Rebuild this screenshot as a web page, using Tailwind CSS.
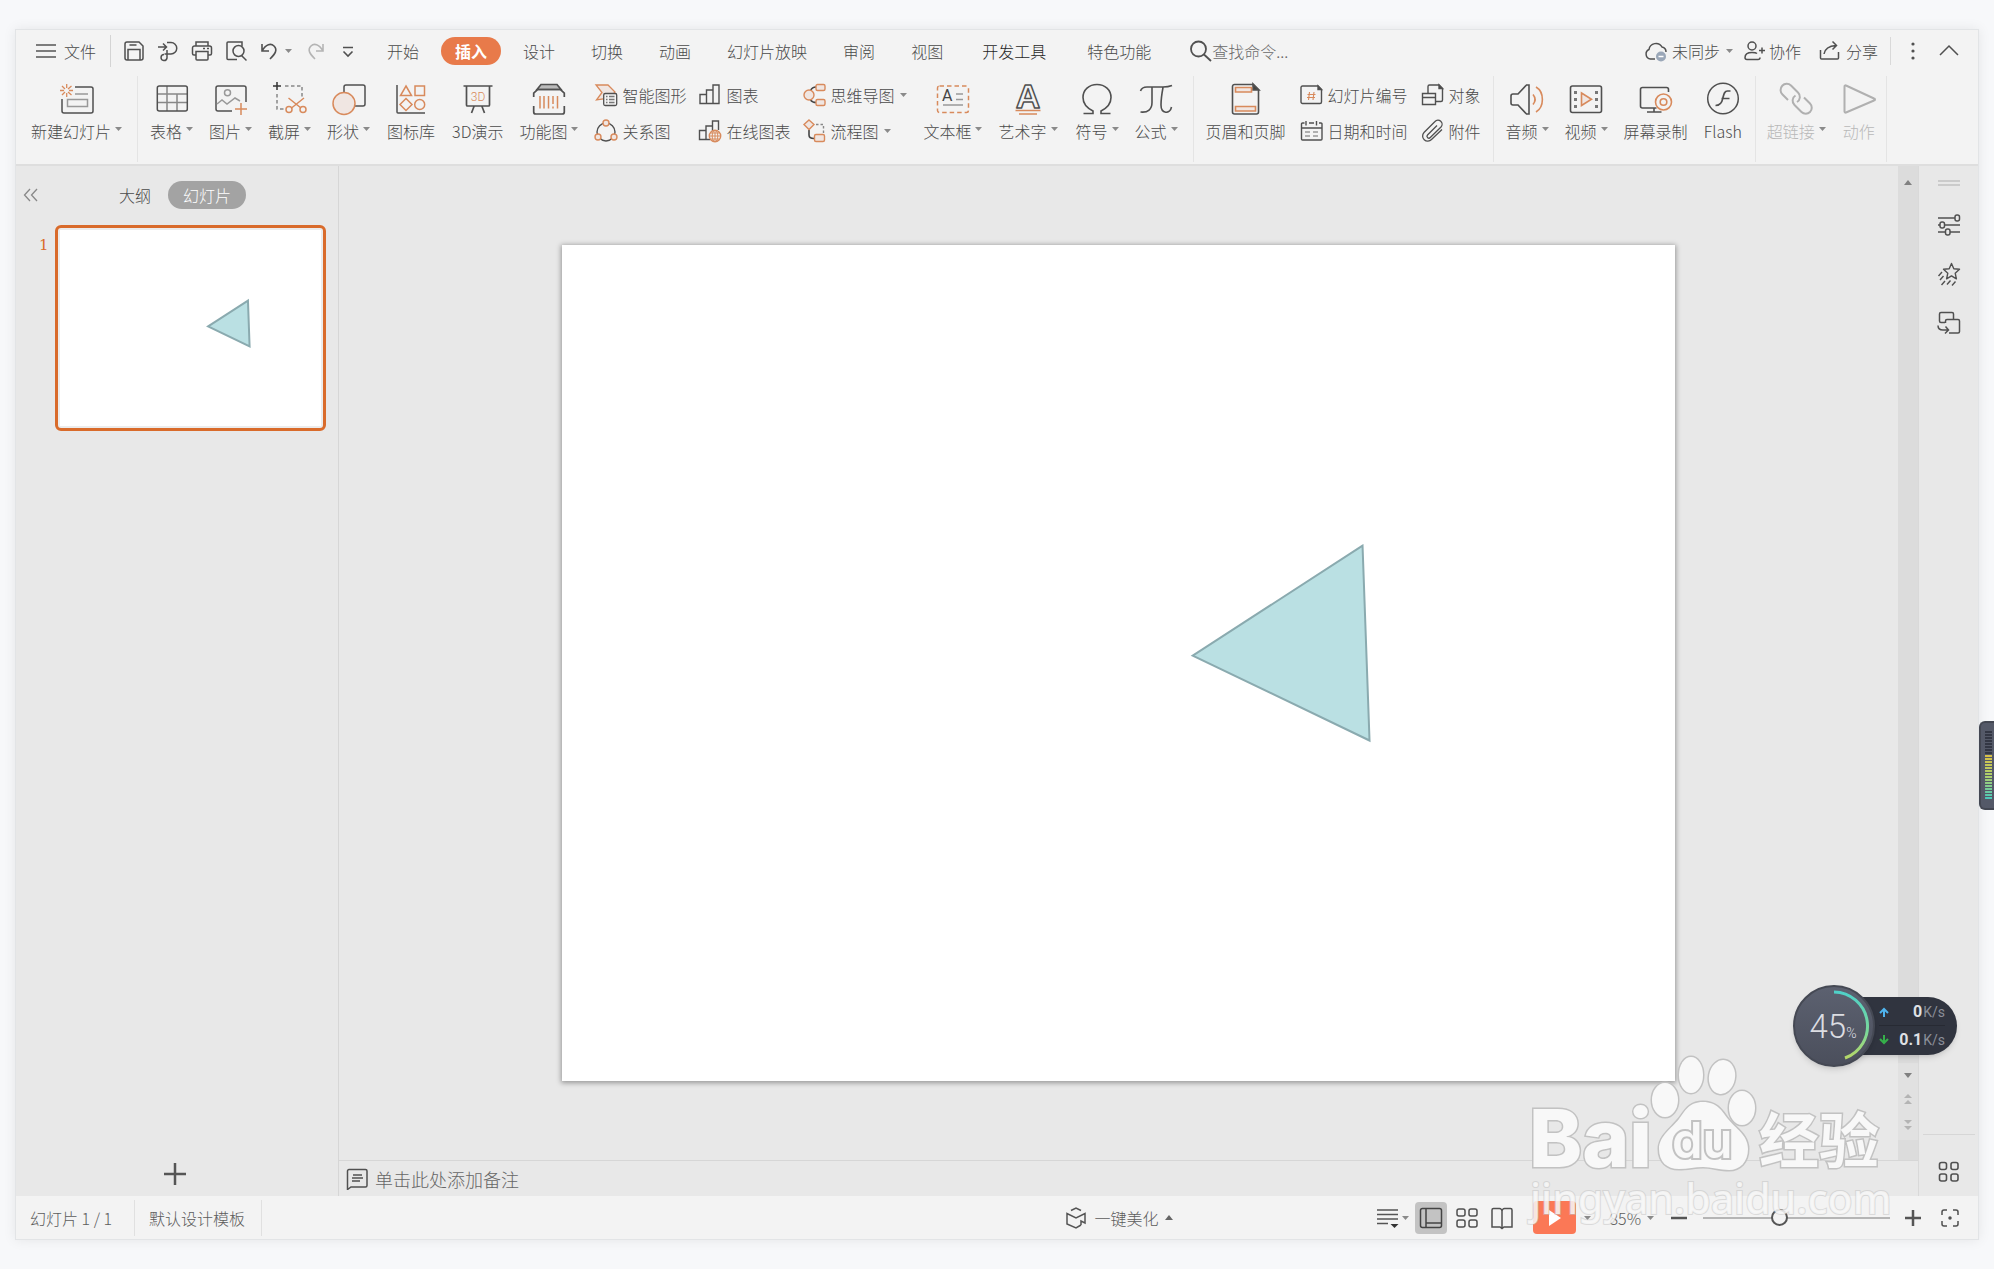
<!DOCTYPE html>
<html lang="zh-CN">
<head>
    <meta charset="UTF-8">
    <meta name="viewport" content="width=device-width, initial-scale=1.0">
    <title>演示文稿</title>
    <script src="https://cdn.jsdelivr.net/npm/@tailwindcss/browser@4"></script>
</head>
<body class="relative min-h-screen flex flex-col bg-[#f7f8fa] px-[15px] py-[29px] overflow-hidden font-['Noto_Sans_CJK_SC',sans-serif] font-light text-base leading-5 text-[#4a4a4a]">

    <!-- shared small glyphs -->
    <svg class="hidden">
        <symbol id="caret" viewBox="0 0 7 4"><path d="M0 0h7L3.500 4z" fill="#8a8a8a"/></symbol>
        <symbol id="triangle" viewBox="0 0 1114 836">
            <path d="M801 301L631 411L808 496z" fill="#bae0e3" stroke="#8aaaaf" stroke-width="2" vector-effect="non-scaling-stroke"/>
        </symbol>
    </svg>

    <div class="flex-1 flex flex-col border border-[#e2e4e6] shadow-[0_0_12px_rgba(0,0,0,0.08)] bg-[#f3f3f3]">

        <!-- menu bar -->
        <header class="flex items-center h-[42px] pl-5 pr-[19px] whitespace-nowrap">
            <button class="flex items-center gap-2">
                <svg class="w-5 h-5" fill="none" stroke="#555" stroke-width="1.500"><path d="M0 4h20M0 10h20M0 16h20"/></svg>
                文件
            </button>
            <div class="w-px h-8 bg-[#d4d4d4] ml-[14px] mr-3"></div>
            <div class="flex items-center gap-[12px]">
                <button aria-label="保存"><svg class="w-[22px] h-[22px]" fill="none" stroke="#505050" stroke-width="1.500"><path d="M2 4a2 2 0 0 1 2-2h12l4 4v12a2 2 0 0 1-2 2H4a2 2 0 0 1-2-2zM5 20V9.500h12V20M6.500 5h7" /></svg></button>
                <button aria-label="输出"><svg class="w-[22px] h-[22px]" fill="none" stroke="#505050" stroke-width="1.500"><path d="M1 7h8M6 3.500L9.500 7L6 10.500M10 2.500h4a5.500 5.500 0 0 1 0 11.500H7.500M10 10v8a3 3 0 1 1-3-3.500"/></svg></button>
                <button aria-label="打印"><svg class="w-[22px] h-[22px]" fill="none" stroke="#505050" stroke-width="1.500"><path d="M5 6V2h12v4M5 15H3a1.500 1.500 0 0 1-1.500-1.500V8A2 2 0 0 1 3.500 6h15a2 2 0 0 1 2 2v5.500A1.500 1.500 0 0 1 19 15h-2M5 11.500h12V19a1 1 0 0 1-1 1H6a1 1 0 0 1-1-1zM12 8.500h2M16 8.500h2"/></svg></button>
                <button aria-label="打印预览"><svg class="w-[22px] h-[22px]" fill="none" stroke="#505050" stroke-width="1.500"><path d="M17 6V2H3a1 1 0 0 0-1 1v15.500a1 1 0 0 0 1 1h9M16.500 15.500l5 5"/><circle cx="13.500" cy="11" r="5.500"/></svg></button>
                <button aria-label="撤销" class="flex items-center gap-1"><svg class="w-[22px] h-[22px]" fill="none" stroke="#505050" stroke-width="1.600"><path d="M3 4v7h7M3 11c4-7 9-8 12-5c4 4 1 8-4 13"/></svg><svg class="w-[7px] h-1"><use href="#caret"/></svg></button>
                <button aria-label="恢复"><svg class="w-[22px] h-[22px]" fill="none" stroke="#b4b4b4" stroke-width="1.600"><path d="M19 4v7h-7M19 11c-4-7-9-8-12-5c-4 4-1 8 4 13"/></svg></button>
                <button aria-label="更多"><svg class="w-[18px] h-[22px]" fill="none" stroke="#505050" stroke-width="1.600"><path d="M5 7.500h10M5.500 11.500L10 16l4.500-4.500"/></svg></button>
            </div>
            <nav class="flex items-center gap-2 ml-[17px]">
                <button class="px-[14px] h-[28px]">开始</button>
                <button class="px-[14px] h-[28px] rounded-full bg-[#e87a4a] text-white font-bold">插入</button>
                <button class="px-[14px] h-[28px]">设计</button>
                <button class="px-[14px] h-[28px]">切换</button>
                <button class="px-[14px] h-[28px]">动画</button>
                <button class="px-[14px] h-[28px]">幻灯片放映</button>
                <button class="px-[14px] h-[28px]">审阅</button>
                <button class="px-[14px] h-[28px]">视图</button>
                <button class="px-[17px] h-[28px] text-[#1f1f1f]">开发工具</button>
                <button class="px-[16px] h-[28px]">特色功能</button>
            </nav>
            <label class="flex items-center ml-[23px]">
                <svg class="w-[22px] h-[22px]" fill="none" stroke="#505050" stroke-width="1.800"><circle cx="8.500" cy="9" r="7.500"/><path d="M14 14.500l7 6.500"/></svg>
                <input type="text" aria-label="查找命令" placeholder="查找命令..." class="w-[100px] bg-transparent outline-none placeholder:text-[#6a6a6a]">
            </label>
            <div class="flex items-center ml-auto">
                <button class="flex items-center">
                    <svg class="w-6 h-[22px] mr-1" fill="none" stroke="#505050" stroke-width="1.500"><path d="M11 19H6.500A5 5 0 0 1 5 9.500A7 7 0 0 1 18 7a5 5 0 0 1 4 5"/><circle cx="17" cy="16.500" r="5" fill="#9aa7b8" stroke="none"/><path d="M14.500 16.500h5" stroke="#fff"/></svg>
                    未同步<svg class="w-[7px] h-1 ml-[6px]"><use href="#caret"/></svg>
                </button>
                <button class="flex items-center gap-1 ml-[10px]">
                    <svg class="w-[22px] h-[22px]" fill="none" stroke="#505050" stroke-width="1.500"><circle cx="9" cy="6" r="4"/><path d="M14 13.500c-1-1-2-1-5-1c-5 0-7 2-7 5c0 1.500 1 2 2 2h11c1.500 0 2-1 2-2M16 10.500h6M19 7.500v6"/></svg>
                    协作
                </button>
                <button class="flex items-center gap-[5px] ml-[18px]">
                    <svg class="w-[22px] h-[22px]" fill="none" stroke="#505050" stroke-width="1.500"><path d="M1.500 10v8a1 1 0 0 0 1 1h16a1 1 0 0 0 1-1v-6M5 14c1-6 5-8 12-8.500M13.500 1.500l4 4l-4 4"/></svg>
                    分享
                </button>
                <div class="w-px h-7 bg-[#d9d9d9] ml-3 mr-[18px]"></div>
                <button aria-label="更多选项"><svg class="w-2 h-5" fill="#505050"><circle cx="4" cy="3" r="1.600"/><circle cx="4" cy="10" r="1.600"/><circle cx="4" cy="17" r="1.600"/></svg></button>
                <button aria-label="收起功能区" class="ml-[22px]"><svg class="w-5 h-5" fill="none" stroke="#505050" stroke-width="1.500"><path d="M1 14L10 5l9 9"/></svg></button>
            </div>
        </header>

        <!-- ribbon -->
        <div class="flex h-[94px] pt-1 pb-[2px] whitespace-nowrap border-b-2 border-[#dedede]">
            <div class="flex items-start pt-[6px] pl-[15px] pr-[15px] border-r border-[#e4e4e4]">
                <button class="flex flex-col items-center gap-[5px]">
                    <svg class="w-[34px] h-[34px]" fill="none" stroke="#505050" stroke-width="1.500"><path d="M15 5h16a2 2 0 0 1 2 2v22a2 2 0 0 1-2 2H4a2 2 0 0 1-2-2V17"/><path d="M6.700 2v4M6.700 11v4M0 8.500h4M9 8.500h4M2 4l3 3M8 10l3.500 3M11.500 4L8 7M5 10l-3 3" stroke="#d88a5c" stroke-width="1.300"/><path d="M15 12h13M7.500 17.500h20v7h-20z" stroke="#999"/></svg>
                    <span class="flex items-center gap-1">新建幻灯片<svg class="w-[7px] h-1 mb-1"><use href="#caret"/></svg></span>
                </button>
            </div>
            <div class="flex items-start pt-[6px] pl-3 pr-[15px] gap-4 border-r border-[#e4e4e4]">
                <button class="flex flex-col items-center gap-[5px]">
                    <svg class="w-[34px] h-[34px]" fill="none" stroke="#505050" stroke-width="1.500"><path d="M12 4v25M22 12v17M2 12h30M2 20.500h30" stroke="#888"/><rect x="2.300" y="4" width="30" height="25" rx="2"/></svg>
                    <span class="flex items-center gap-1">表格<svg class="w-[7px] h-1 mb-1"><use href="#caret"/></svg></span>
                </button>
                <button class="flex flex-col items-center gap-[5px]">
                    <svg class="w-[34px] h-[34px]" fill="none" stroke="#505050" stroke-width="1.500"><path d="M18 29H4a2 2 0 0 1-2-2V6a2 2 0 0 1 2-2h26a2 2 0 0 1 2 2v14"/><g stroke="#999"><circle cx="13.500" cy="10.700" r="3"/><path d="M3 22l5-4l5 4l8-6l5 3"/></g><path d="M27 21v12M21 27h12" stroke="#d88a5c"/></svg>
                    <span class="flex items-center gap-1">图片<svg class="w-[7px] h-1 mb-1"><use href="#caret"/></svg></span>
                </button>
                <button class="flex flex-col items-center gap-[5px]">
                    <svg class="w-[34px] h-[34px]" fill="none" stroke="#888" stroke-width="1.500"><path d="M12 4h17v12M4 12v15h8" stroke-dasharray="3.500 2.500"/><path d="M4 0v8M0 4h8" stroke="#333"/><g stroke="#d88a5c"><path d="M15.500 16L28 26M31 16L18.500 26"/><circle cx="16" cy="27.500" r="3"/><circle cx="30" cy="27.500" r="3"/></g></svg>
                    <span class="flex items-center gap-1">截屏<svg class="w-[7px] h-1 mb-1"><use href="#caret"/></svg></span>
                </button>
                <button class="flex flex-col items-center gap-[5px]">
                    <svg class="w-[34px] h-[34px]" fill="none" stroke="#505050" stroke-width="1.500"><rect x="12" y="3" width="21" height="21" rx="2"/><circle cx="12" cy="21.500" r="11" fill="#f0e6e2" stroke="#d88a5c"/></svg>
                    <span class="flex items-center gap-1">形状<svg class="w-[7px] h-1 mb-1"><use href="#caret"/></svg></span>
                </button>
                <button class="flex flex-col items-center gap-[5px] px-px">
                    <svg class="w-[34px] h-[34px]" fill="none" stroke="#505050" stroke-width="1.500"><path d="M3 3v27a1 1 0 0 0 1 1h27"/><g stroke="#d88a5c"><path d="M12 4l5.500 9.500h-11zM21 4h9.500v9.500H21zM12 16.500l6 6l-6 6l-6-6z"/><circle cx="25.700" cy="22.500" r="5"/></g></svg>
                    <span>图标库</span>
                </button>
                <button class="flex flex-col items-center gap-[5px]">
                    <svg class="w-[34px] h-[34px]" fill="none" stroke="#505050" stroke-width="1.700"><path d="M2.500 4h29M5.500 4v19a1 1 0 0 0 1 1h21a1 1 0 0 0 1-1V4M13 24.500L10.500 31M21 24.500l2.500 6.500"/><text x="17" y="18.500" text-anchor="middle" font-family="Roboto" font-size="12" fill="#d88a5c" stroke="none">3D</text></svg>
                    <span>3D演示</span>
                </button>
                <button class="flex flex-col items-center gap-[5px]">
                    <svg class="w-[34px] h-[34px]" fill="none" stroke="#505050" stroke-width="1.700"><path d="M5 7.500L9 2.500h16l4 5z" fill="#bbb"/><path d="M1.700 15v-4L5.500 7.500h23l3.800 3.500v4M1.700 24v6a2 2 0 0 0 2 2h26.600a2 2 0 0 0 2-2v-6"/><path d="M8 14v12.500M12 14v12.500M16.500 14v12.500M21 14v8M21 24.500v2M25.500 14v12.500" stroke="#d88a5c" stroke-width="1.500"/></svg>
                    <span class="flex items-center gap-1">功能图<svg class="w-[7px] h-1 mb-1"><use href="#caret"/></svg></span>
                </button>
                <div class="grid grid-cols-[repeat(3,auto)] gap-x-3 gap-y-3 pt-px">
                    <button class="flex items-center gap-1">
                        <svg class="w-6 h-6" fill="none" stroke="#d88a5c" stroke-width="1.300"><path d="M2 2h12l7 7l-5 6L2.500 17L8 9.500z" fill="#f0e6e2"/><rect x="9.700" y="10.500" width="13" height="12" rx="1.500" fill="#f3f3f3" stroke="#505050"/><path d="M12 13.500h1.500M15 13.500h5.500M12 16.500h1.500M15 16.500h5.500M12 19.500h1.500M15 19.500h5.500" stroke="#777"/></svg>
                        智能图形
                    </button>
                    <button class="flex items-center gap-1">
                        <svg class="w-6 h-6" fill="none" stroke="#505050" stroke-width="1.400"><path d="M2 20.500V11.500h6.500v9zM8.500 20.500V7H15v13.500M15 20.500V2h6v18.500H2"/></svg>
                        图表
                    </button>
                    <button class="flex items-center gap-1">
                        <svg class="w-6 h-6" fill="none" stroke="#d88a5c" stroke-width="1.400"><path d="M8.500 7.500C10 4.500 11.500 4 14 4M8.500 17c1.500 2 3 2.500 5.500 2.500" stroke="#444" stroke-width="1.600"/><circle cx="7" cy="12" r="5" fill="#f0e6e2"/><rect x="14" y="1.500" width="9" height="6" rx="1.500" fill="#f0e6e2"/><rect x="14" y="16.500" width="9" height="6" rx="1.500" fill="#f0e6e2"/></svg>
                        思维导图<svg class="w-[7px] h-1 ml-[2px]"><use href="#caret"/></svg>
                    </button>
                    <button class="flex items-center gap-1">
                        <svg class="w-6 h-6" fill="none" stroke="#505050" stroke-width="1.400"><circle cx="12" cy="13" r="9"/><g stroke="#d88a5c" fill="#f0e6e2"><circle cx="12" cy="4" r="3"/><circle cx="4" cy="18" r="3"/><circle cx="20" cy="18" r="3"/></g></svg>
                        关系图
                    </button>
                    <button class="flex items-center gap-1">
                        <svg class="w-6 h-6" fill="none" stroke="#505050" stroke-width="1.400"><path d="M1.500 20.500V11.500H8v9zM8 20.500V7h6.500v6M14.500 10V2h6v9M1.500 20.500H12"/><circle cx="17" cy="17" r="5.700" fill="#f3f3f3" stroke="#d88a5c"/><path d="M11 17h12M17 11v12M12.500 14h9M12.500 20h9" stroke="#d88a5c" stroke-width="1"/><ellipse cx="17" cy="17" rx="2.800" ry="5.700" stroke="#d88a5c" stroke-width="1"/></svg>
                        在线图表
                    </button>
                    <button class="flex items-center gap-1">
                        <svg class="w-6 h-6" fill="none" stroke="#d88a5c" stroke-width="1.400"><path d="M7 11v5c0 2.500 2 3.500 5 3.500" stroke="#444" stroke-width="1.600"/><path d="M14 5.500h7.500V14" stroke="#888" stroke-dasharray="2.500 2"/><path d="M7 1l5 4.500l-5 5l-5-5z" fill="#f0e6e2"/><rect x="12.500" y="15.500" width="10" height="7" rx="1.500" fill="#f0e6e2"/></svg>
                        流程图<svg class="w-[7px] h-1 ml-[2px]"><use href="#caret"/></svg>
                    </button>
                </div>
                <button class="flex flex-col items-center gap-[5px]">
                    <svg class="w-[34px] h-[34px]" fill="none" stroke="#999" stroke-width="1.500"><rect x="1.500" y="4" width="31" height="26.500" rx="2" stroke="#d88a5c" stroke-dasharray="4.500 3"/><path d="M20 12h7M20 17.500h7M7 23h20"/><text x="6" y="19" font-family="Roboto" font-size="16" font-weight="400" fill="#444" stroke="none">A</text></svg>
                    <span class="flex items-center gap-1">文本框<svg class="w-[7px] h-1 mb-1"><use href="#caret"/></svg></span>
                </button>
                <button class="flex flex-col items-center gap-[5px] pr-[2px]">
                    <svg class="w-[34px] h-[34px]" fill="none" stroke="#505050" stroke-width="1.500" stroke-linejoin="round"><text x="17" y="26" text-anchor="middle" font-family="Liberation Sans" font-size="34" font-weight="700">A</text><path d="M4.500 28.500h25M8 32h18" stroke="#d88a5c"/></svg>
                    <span class="flex items-center gap-1">艺术字<svg class="w-[7px] h-1 mb-1"><use href="#caret"/></svg></span>
                </button>
                <button class="flex flex-col items-center gap-[5px]">
                    <svg class="w-[34px] h-[34px]" fill="none" stroke="#505050" stroke-width="1.600"><path d="M3.500 31.500H13v-2.500C7 26 3 21.500 3 15.500C3 8 9 2.500 17 2.500S31 8 31 15.500C31 21.500 27 26 21 29v2.500h9.500"/></svg>
                    <span class="flex items-center gap-1">符号<svg class="w-[7px] h-1 mb-1"><use href="#caret"/></svg></span>
                </button>
                <button class="flex flex-col items-center gap-[5px]">
                    <svg class="w-[34px] h-[34px]" fill="none" stroke="#505050" stroke-width="1.600"><path d="M1.500 9C2.500 6 4.500 5 8 5h16c4 0 6-.3 9-1.500M13 5.500v15C13 27 9 31 1.500 30M24 5.500c-1.500 8-2 12-2 17.500c0 9 9 9.500 10.500 2"/></svg>
                    <span class="flex items-center gap-1">公式<svg class="w-[7px] h-1 mb-1"><use href="#caret"/></svg></span>
                </button>
            </div>
            <div class="flex items-start pt-[6px] pl-3 pr-3 border-r border-[#e4e4e4]">
                <button class="flex flex-col items-center gap-[5px]">
                    <svg class="w-[34px] h-[34px]" fill="none" stroke="#505050" stroke-width="1.600"><path d="M5.500 2.500H24l5.500 5.500v22a2 2 0 0 1-2 2h-22a2 2 0 0 1-2-2v-25.500a2 2 0 0 1 2-2z"/><path d="M24 2v6h6z" fill="#444"/><path d="M6.500 5.500h16v4.500h-16zM6.500 24.500h20V29h-20z" stroke="#d88a5c" fill="#f0e6e2"/></svg>
                    <span>页眉和页脚</span>
                </button>
                <div class="grid grid-cols-[repeat(2,auto)] gap-x-[13px] gap-y-3 pt-px ml-[14px]">
                    <button class="flex items-center gap-1">
                        <svg class="w-6 h-6" fill="none" stroke="#505050" stroke-width="1.400"><path d="M2.500 3H18l3.500 3.500V19a1.500 1.500 0 0 1-1.500 1.500H2.500A1.500 1.500 0 0 1 1 19V4.500A1.500 1.500 0 0 1 2.500 3z"/><path d="M18 3v3.500h3.500z" fill="#444"/><path d="M9.500 9l-1 8M14 9l-1 8M7.500 11.500h8M7 14.500h8" stroke="#d88a5c" stroke-width="1.100"/></svg>
                        幻灯片编号
                    </button>
                    <button class="flex items-center gap-1">
                        <svg class="w-6 h-6" fill="none" stroke="#505050" stroke-width="1.400"><path d="M7 10V3.500A1.500 1.500 0 0 1 8.500 2H18l3.500 3.500V17a1.500 1.500 0 0 1-1.500 1.500h-5.500"/><path d="M18 2v3.500h3.500z" fill="#444"/><path d="M1.500 10.500h13v11h-13zM1.500 14.500h13"/></svg>
                        对象
                    </button>
                    <button class="flex items-center gap-1">
                        <svg class="w-6 h-6" fill="none" stroke="#505050" stroke-width="1.400"><path d="M4.500 4H2.500a1 1 0 0 0-1 1v15a1 1 0 0 0 1 1H21a1 1 0 0 0 1-1V5a1 1 0 0 0-1-1h-2M9 4h5M6 2v4.500M16.500 2v4.500M2 9h20"/><path d="M5 13h5M13 13h5M5 17h5M13 17h5" stroke="#999"/></svg>
                        日期和时间
                    </button>
                    <button class="flex items-center gap-1">
                        <svg class="w-6 h-6" fill="none" stroke="#505050" stroke-width="1.300"><path d="M16 6.500L6.500 16a1.800 1.800 0 0 0 2.800 2.500L20 8a4 4 0 0 0-6-5.500L3 13.500a5 5 0 0 0 7.500 7L21 10.500"/></svg>
                        附件
                    </button>
                </div>
            </div>
            <div class="flex items-start pt-[6px] pl-3 pr-[13px] gap-4 border-r border-[#e4e4e4]">
                <button class="flex flex-col items-center gap-[5px]">
                    <svg class="w-[34px] h-[34px]" fill="none" stroke="#505050" stroke-width="1.600"><path d="M3 12h5l8.500-9h2.500v29h-2.500L8 23H3a2 2 0 0 1-2-2v-7a2 2 0 0 1 2-2z"/><path d="M23 12.500c2.500 3 2.500 7 0 10M26 5c8.500 5 8.500 20 0 25" stroke="#d88a5c"/></svg>
                    <span class="flex items-center gap-1">音频<svg class="w-[7px] h-1 mb-1"><use href="#caret"/></svg></span>
                </button>
                <button class="flex flex-col items-center gap-[5px]">
                    <svg class="w-[34px] h-[34px]" fill="none" stroke="#505050" stroke-width="1.600"><rect x="1.500" y="4" width="31" height="26.500" rx="2"/><path d="M6.500 9v18M27.500 9v18" stroke="#777" stroke-width="3" stroke-dasharray="3 4"/><path d="M12.500 11l10 6.200l-10 6.300z" stroke="#d88a5c" fill="#f0e6e2"/></svg>
                    <span class="flex items-center gap-1">视频<svg class="w-[7px] h-1 mb-1"><use href="#caret"/></svg></span>
                </button>
                <button class="flex flex-col items-center gap-[5px]">
                    <svg class="w-[34px] h-[34px]" fill="none" stroke="#505050" stroke-width="1.600"><path d="M29.500 10V7.500a2 2 0 0 0-2-2h-24a2 2 0 0 0-2 2V24a2 2 0 0 0 2 2h14M15 26v4M8 30h14.500"/><g stroke="#d88a5c"><circle cx="24.500" cy="20" r="8" fill="#f3f3f3"/><circle cx="24.500" cy="20" r="3.300"/></g></svg>
                    <span>屏幕录制</span>
                </button>
                <button class="flex flex-col items-center gap-[5px]">
                    <svg class="w-[34px] h-[34px]" fill="none" stroke="#505050" stroke-width="1.500"><circle cx="17" cy="16.500" r="15.300"/><path d="M24.500 9h-3c-3 0-3.500 2.500-4.500 6.500c-1 5-2.500 8-7.500 8M15.500 16.500h8" stroke-width="1.700"/></svg>
                    <span>Flash</span>
                </button>
            </div>
            <div class="flex items-start pt-[6px] pl-[11px] pr-[10px] gap-4 border-r border-[#e4e4e4] text-[#b8b8b8]">
                <button class="flex flex-col items-center gap-[5px]">
                    <svg class="w-[34px] h-[34px]" fill="none" stroke="#b0b0b0" stroke-width="2"><path d="M9 18L3.500 12.500A6 6 0 0 1 12 3.500l7 7a6 6 0 0 1-1 9.500M25 15.500l6 6a6 6 0 0 1-8.500 8.500l-7-7a6 6 0 0 1 1-9.500"/></svg>
                    <span class="flex items-center gap-1">超链接<svg class="w-[7px] h-1 mb-1"><use href="#caret"/></svg></span>
                </button>
                <button class="flex flex-col items-center gap-[5px]">
                    <svg class="w-[34px] h-[34px]" fill="none" stroke="#b0b0b0" stroke-width="2" stroke-linejoin="round"><path d="M2.500 4.500v25a1 1 0 0 0 1.500 1L32 18.500a1 1 0 0 0 0-2L4 3.500a1 1 0 0 0-1.500 1z"/></svg>
                    <span>动作</span>
                </button>
            </div>
        </div>

        <!-- work area -->
        <div class="flex-1 flex bg-[#e8e8e8]">
            <aside class="w-[323px] shrink-0 flex flex-col border-r border-[#d6d6d6]">
                <div class="flex items-center pt-[15px] pl-[7px]">
                    <button aria-label="收起"><svg class="w-4 h-4" fill="none" stroke="#888" stroke-width="1.300"><path d="M7 2L1.500 8L7 14M14 2L8.500 8L14 14"/></svg></button>
                    <button class="ml-[80px]">大纲</button>
                    <button class="ml-[17px] px-[15px] h-7 rounded-full bg-[#a3a3a3] text-white">幻灯片</button>
                </div>
                <div class="flex pt-4 pl-[23px] pr-3 gap-[6px]">
                    <span class="pt-[10px] text-[15px] text-[#d96b2b] font-['DejaVu_Serif','Noto_Sans_CJK_SC',serif]">1</span>
                    <button aria-label="幻灯片 1" class="flex-1 border-[3px] border-[#d96b2b] rounded-md p-[2px] bg-[#ececec]">
                        <svg class="w-full bg-white aspect-[4/3]"><use href="#triangle"/></svg>
                    </button>
                </div>
                <button aria-label="新建幻灯片" class="mt-auto mb-[10px] ml-[147px] w-6"><svg class="w-6 h-6" stroke="#555" stroke-width="2.500"><path d="M12 1v22M1 12h22"/></svg></button>
            </aside>

            <div class="flex-1 flex flex-col">
                <div class="flex-1 flex">
                    <main class="flex-1 flex items-center justify-center">
                        <div class="w-5/7 aspect-[4/3] bg-white shadow-[0_1px_5px_1px_rgba(0,0,0,0.35)]">
                            <svg class="w-full h-full"><use href="#triangle"/></svg>
                        </div>
                    </main>
                    <div class="w-5 flex flex-col items-center bg-[#dcdcdc]">
                        <svg class="w-2 h-[5px] mt-[14px]" fill="#808080"><path d="M0 5h8L4 0z"/></svg>
                        <div class="mt-auto mb-5 w-full flex flex-col items-center gap-4 py-[10px] bg-[#e1e1e1]">
                            <svg class="w-2 h-[5px]" fill="#808080"><path d="M0 0h8L4 5z"/></svg>
                            <svg class="w-2 h-[10px]" fill="#b4b4b4"><path d="M0 4h8L4 0zM0 10h8L4 6z"/></svg>
                            <svg class="w-2 h-[10px]" fill="#b4b4b4"><path d="M0 0h8L4 4zM0 6h8l-4 4z"/></svg>
                        </div>
                    </div>
                </div>
                <label class="h-9 flex items-center gap-[7px] pl-[7px] border-t border-[#d6d6d6]">
                    <svg class="w-[22px] h-[22px]" fill="none" stroke="#505050" stroke-width="1.500"><path d="M3 1.500h16.500A1.500 1.500 0 0 1 21 3v14.500a1.500 1.500 0 0 1-1.500 1.500H5l-3.500 2.500V3A1.500 1.500 0 0 1 3 1.500z"/><path d="M7 7h9M6 10h11M6 13h8"/></svg>
                    <input type="text" aria-label="备注" placeholder="单击此处添加备注" class="flex-1 bg-transparent outline-none text-lg leading-6 placeholder:text-[#666]">
                </label>
            </div>

            <!-- side tools -->
            <div class="w-[60px] flex flex-col items-center border-l border-[#d9d9d9] pt-[14px]">
                <div class="w-[22px] h-[6px] border-y-2 border-[#cbcbcb]"></div>
                <button aria-label="属性" class="mt-[27px]"><svg class="w-6 h-6" fill="#e8e8e8" stroke="#505050" stroke-width="1.500"><path d="M1 5h22M1 12h22M1 19h22"/><rect x="18" y="2" width="4.500" height="6" rx="2"/><rect x="3" y="9" width="4.500" height="6" rx="2"/><rect x="8.500" y="16" width="4.500" height="6" rx="2"/></svg></button>
                <button aria-label="动画窗格" class="mt-[25px]"><svg class="w-6 h-6" fill="none" stroke="#505050" stroke-width="1.400"><path d="M14.500 1.500l2.300 5.200l5.700.6l-4.300 3.900l1.200 5.600l-4.900-2.900l-4.900 2.900l1.200-5.600l-4.300-3.900l5.700-.6z" stroke-linejoin="round"/><path d="M5 10l-3.500 4M6.500 14L3 18M8 19l-3.500 4M13.500 18.500l-3.500 4M18.500 19.500l-3.500 4"/></svg></button>
                <button aria-label="切换窗格" class="mt-[25px]"><svg class="w-6 h-6" fill="none" stroke="#505050" stroke-width="1.500"><path d="M8 11.500H4A1.500 1.500 0 0 1 2.500 10V3A1.500 1.500 0 0 1 4 1.500h11A1.500 1.500 0 0 1 16.500 3v5M8.500 12v-2A1.500 1.500 0 0 1 10 8.500h11A1.500 1.500 0 0 1 22.500 10v10.500A1.500 1.500 0 0 1 21 22h-9M1 14.500c0 3 2 4.500 5 4.500h5M8.500 15.500L11.500 19l-3.500 3.500"/></svg></button>
                <div class="mt-auto w-[52px] h-px bg-[#d6d6d6]"></div>
                <button aria-label="应用" class="mt-[25px] mb-3"><svg class="w-6 h-6" fill="none" stroke="#505050" stroke-width="1.600"><rect x="2.500" y="2.500" width="7" height="7" rx="2"/><rect x="14" y="2.500" width="7" height="7" rx="2"/><rect x="2.500" y="14" width="7" height="7" rx="2"/><rect x="14" y="14" width="7" height="7" rx="2"/></svg></button>
            </div>
        </div>

        <!-- status bar -->
        <footer class="flex items-center h-[43px] pl-[14px] pr-[18px] whitespace-nowrap text-[#5c5c5c]">
            <span>幻灯片 1 / 1</span>
            <div class="w-px h-9 bg-[#e0e0e0] ml-[22px] mr-[14px]"></div>
            <span>默认设计模板</span>
            <div class="w-px h-9 bg-[#e0e0e0] ml-4"></div>
            <button class="ml-auto mr-[203px] flex items-center">
                <svg class="w-[22px] h-[22px] mr-2" fill="none" stroke="#555" stroke-width="1.500"><path d="M6 3.500L11 1l5 2.500M16 18l-5 3l-9-4V6.500l9 4.500l9-4.500V16l-4-2v4"/></svg>
                一键美化<svg class="w-2 h-[5px] ml-[6px]" fill="#666"><path d="M0 5h8L4 0z"/></svg>
            </button>
            <button aria-label="备注选项" class="flex items-center gap-[2px]"><svg class="w-6 h-[22px]" fill="none" stroke="#555" stroke-width="1.500"><path d="M1 3h21M1 7.500h21M1 12h21M1 16.500h11"/><path d="M14.500 17h8l-4 4z" fill="#333" stroke="none"/></svg><svg class="w-[7px] h-1"><use href="#caret"/></svg></button>
            <button aria-label="普通视图" class="ml-[6px] w-8 h-8 flex items-center justify-center rounded bg-[#c3c3c3]"><svg class="w-6 h-6" fill="none" stroke="#444" stroke-width="1.500"><rect x="1.500" y="2.500" width="21" height="19" rx="2"/><path d="M7 2.500V21M7 17h15"/></svg></button>
            <button aria-label="幻灯片浏览" class="ml-2"><svg class="w-6 h-6" fill="none" stroke="#505050" stroke-width="1.500"><rect x="2" y="3" width="8" height="7" rx="2"/><rect x="14" y="3" width="8" height="7" rx="2"/><rect x="2" y="14" width="8" height="7" rx="2"/><rect x="14" y="14" width="8" height="7" rx="2"/></svg></button>
            <button aria-label="阅读视图" class="ml-[11px]"><svg class="w-6 h-6" fill="none" stroke="#505050" stroke-width="1.500"><path d="M12 5v18M12 5c0-1-1-2.500-2.500-2.500h-6a1.500 1.500 0 0 0-1.500 1.500V21h8l2 1.500l2-1.500h8V4a1.500 1.500 0 0 0-1.500-1.500h-6C13 2.500 12 4 12 5z"/></svg></button>
            <button aria-label="播放" class="ml-[19px] w-[43px] h-[33px] flex items-center justify-center rounded bg-[#fb7856]"><svg class="w-4 h-[18px]" fill="#fff"><path d="M3 1l12 8L3 17z"/></svg></button>
            <svg class="w-[7px] h-1 ml-2"><use href="#caret"/></svg>
            <button class="ml-[19px] flex items-center gap-[6px]">85%<svg class="w-[7px] h-1"><use href="#caret"/></svg></button>
            <button aria-label="缩小" class="ml-[17px]"><svg class="w-4 h-4" stroke="#555" stroke-width="2.500"><path d="M0 8h16"/></svg></button>
            <input type="range" aria-label="缩放" value="40" class="ml-4 w-[187px] h-5 appearance-none bg-linear-to-b from-transparent from-45% via-[#777] via-50% to-transparent to-55% [&::-webkit-slider-thumb]:appearance-none [&::-webkit-slider-thumb]:w-[17px] [&::-webkit-slider-thumb]:h-[17px] [&::-webkit-slider-thumb]:rounded-full [&::-webkit-slider-thumb]:border-2 [&::-webkit-slider-thumb]:border-[#555] [&::-webkit-slider-thumb]:bg-[#f3f3f3]">
            <button aria-label="放大" class="ml-[14px]"><svg class="w-[18px] h-[18px]" stroke="#555" stroke-width="2.500"><path d="M1 9h16M9 1v16"/></svg></button>
            <button aria-label="适应窗口" class="ml-[18px]"><svg class="w-5 h-5" fill="none" stroke="#505050" stroke-width="1.500"><path d="M2 7V4a2 2 0 0 1 2-2h3M13 2h3a2 2 0 0 1 2 2v3M18 13v3a2 2 0 0 1-2 2h-3M7 18H4a2 2 0 0 1-2-2v-3"/><circle cx="10" cy="10" r="1" fill="#505050"/></svg></button>
        </footer>
    </div>

    <!-- site mark -->
    <svg class="absolute right-[100px] bottom-[34px] w-[370px] h-[184px] pointer-events-none" viewBox="0 0 370 184" stroke="#c2c2c2" stroke-width="3" paint-order="stroke" fill="#f8f8f8">
        <text x="5" y="116" font-family="Inter" font-size="80" font-weight="800">Bai</text>
        <g>
            <ellipse cx="141" cy="49" rx="13" ry="17"/>
            <ellipse cx="167" cy="24" rx="12" ry="18"/>
            <ellipse cx="198" cy="26" rx="13" ry="17" transform="rotate(10 198 26)"/>
            <ellipse cx="218" cy="57" rx="13" ry="17"/>
            <path d="M179 51c-14 0-18 9-24 17c-7 9-20 17-20 30c0 13 8 20 20 20c9 0 16-2 24-2s17 3 26 3c11 0 19-8 19-21c0-14-12-20-20-30c-6-8-11-17-25-17z"/>
        </g>
        <text x="148" y="107" font-family="Inter" font-size="49" font-weight="600" stroke-width="4">du</text>
        <text x="235" y="112" font-family="Noto Sans CJK SC" font-size="60" font-weight="700">经验</text>
        <text x="6" y="163" font-family="Noto Sans" font-size="41" font-weight="500" fill-opacity="0.850" stroke-opacity="0.500" stroke-width="2">jingyan.baidu.com</text>
    </svg>

    <!-- memory and network monitor -->
    <div class="absolute right-[37px] top-[985px] w-[164px] h-[82px] flex items-center font-['Roboto',sans-serif]">
        <div class="ml-[60px] flex-1 h-[58px] rounded-r-full bg-[#30343f] shadow-md pl-[26px] pr-3 flex flex-col justify-center text-[#dfe0e4]">
            <div class="flex items-center h-[28px] text-base font-bold border-b border-[#272a33]"><svg class="w-[10px] h-[10px] mr-auto" fill="none" stroke="#4fb4ee" stroke-width="2"><path d="M5 10V2M1 6l4-4l4 4"/></svg>0<span class="ml-px text-sm font-normal text-[#8b8f99]">K/s</span></div>
            <div class="flex items-center h-[28px] text-base font-bold"><svg class="w-[10px] h-[10px] mr-auto" fill="none" stroke="#35b04a" stroke-width="2"><path d="M5 0v8M1 4l4 4l4-4"/></svg>0.1<span class="ml-px text-sm font-normal text-[#8b8f99]">K/s</span></div>
        </div>
        <div class="absolute left-0 top-0 w-[82px] h-[82px] rounded-full bg-linear-to-b from-[#5c6170] to-[#4b4f5c] border-2 border-[#454954] shadow-md flex items-baseline justify-center pt-[24px] pr-[2px] text-[#dcdde2]">
            <span class="text-[33px] leading-8 font-light">45</span><span class="text-sm">%</span>
            <svg class="absolute -left-[2px] -top-[2px] w-[82px] h-[82px]" fill="none" stroke-width="3">
                <defs><linearGradient id="ring" x1="0" y1="0" x2="0" y2="1"><stop offset="0" stop-color="#4fd0c8"/><stop offset="0.600" stop-color="#7ad89a"/><stop offset="1" stop-color="#b5d768"/></linearGradient></defs>
                <path d="M41 7a34 34 0 0 1 11 66" stroke="url(#ring)"/>
            </svg>
        </div>
    </div>

    <!-- level meter docked on the edge -->
    <div class="absolute right-0 top-[721px] w-[15px] h-[89px] rounded-l-md bg-[#545968] border-2 border-r-0 border-[#434752] pl-1 pt-2 pb-2">
        <svg class="w-[7px] h-[69px]" fill="none" stroke-width="7">
            <defs><linearGradient id="level" gradientUnits="userSpaceOnUse" x1="0" y1="24" x2="0" y2="69"><stop offset="0" stop-color="#d9c046"/><stop offset="0.500" stop-color="#a8cf70"/><stop offset="1" stop-color="#45c9bf"/></linearGradient></defs>
            <path d="M3.500 0V23" stroke="#333744" stroke-dasharray="2 1"/>
            <path d="M3.500 24L3.600 69" stroke="url(#level)" stroke-dasharray="2 1"/>
        </svg>
    </div>
</body>
</html>
